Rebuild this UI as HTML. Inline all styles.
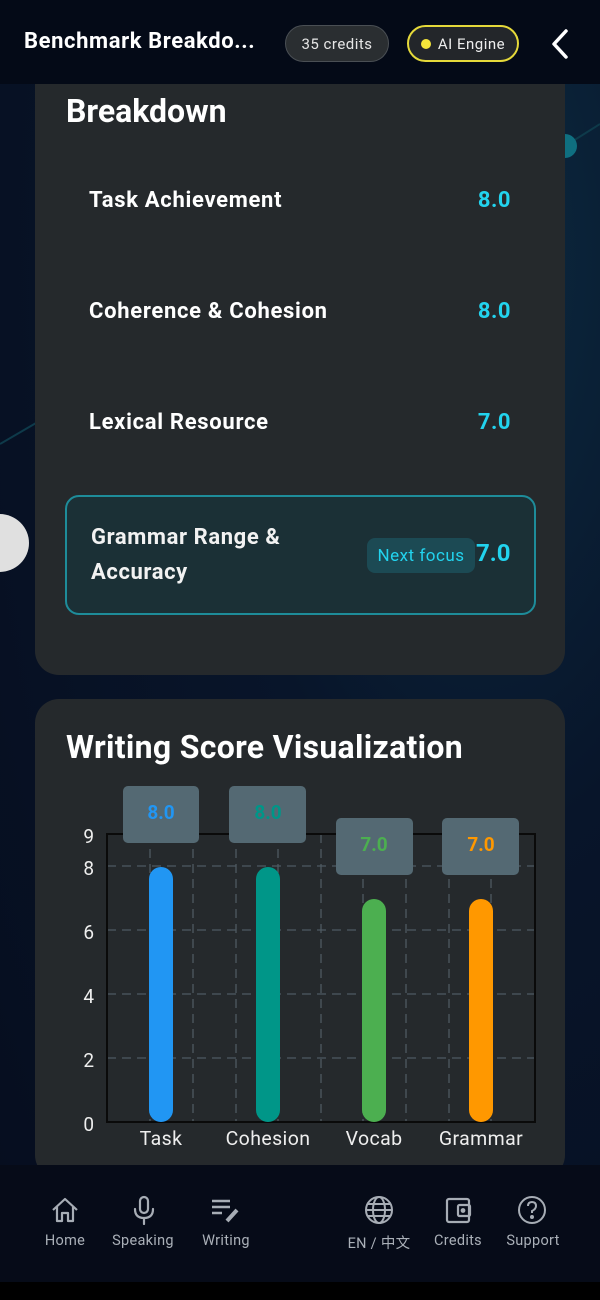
<!DOCTYPE html>
<html><head><meta charset="utf-8"><style>
*{margin:0;padding:0;box-sizing:border-box}
body{width:600px;height:1300px;overflow:hidden;background:#071226;font-family:"Roboto","Liberation Sans","Noto Sans CJK SC",sans-serif;color:#fff;position:relative}
.bg{position:absolute;inset:0;background:radial-gradient(ellipse at 80% 20%,#0c2a40 0%,#08152a 40%,#060d1e 100%)}
.hdr{position:absolute;left:0;top:0;width:600px;height:84px;background:#040a17}
.title{position:absolute;left:24px;top:29px;font-size:22px;font-weight:bold;letter-spacing:.6px}
.pill{position:absolute;top:25px;height:37px;border-radius:19px;font-size:15px;display:flex;align-items:center;justify-content:center;letter-spacing:.5px}
.row{position:absolute;left:89px;font-size:22px;font-weight:bold;letter-spacing:.7px}
.val{position:absolute;right:89px;font-size:22px;font-weight:bold;color:#22d3ee;letter-spacing:.5px}
.nav{position:absolute;left:0;top:1165px;width:600px;height:117px;background:#060b18}
.ni{position:absolute;top:1232px;font-size:14.5px;color:#aab0b8;text-align:center;width:90px;letter-spacing:.3px}
.ic{position:absolute;top:1195px}
</style></head><body>
<div class="bg"></div>
<svg style="position:absolute;left:0;top:84px" width="600" height="600">
<polyline points="0,360 60,325 305,123 435,152 565,62 600,40" fill="none" stroke="#0e3a4a" stroke-width="2"/>
<circle cx="565" cy="62" r="12" fill="#0f6f80"/>
</svg>
<div class="hdr"></div>
<div class="title">Benchmark Breakdo...</div>
<div class="pill" style="left:285px;width:104px;background:#2a2e31;border:1px solid #4a4f54;color:#e6e6e6">35 credits</div>
<div class="pill" style="left:407px;width:112px;background:#23262a;border:2px solid #e5d93a;color:#eee"><span style="width:10px;height:10px;border-radius:50%;background:#f5e63a;margin-right:7px"></span>AI Engine</div>
<svg style="position:absolute;left:548px;top:28px" width="24" height="32"><polyline points="18,3 6,16 18,29" fill="none" stroke="#fff" stroke-width="3.5" stroke-linecap="round" stroke-linejoin="round"/></svg>

<div style="position:absolute;left:0;top:84px;width:600px;height:600px;overflow:hidden">
<div style="position:absolute;left:35px;top:-30px;width:530px;height:621px;background:#25292c;border-radius:24px"></div>
<div style="position:absolute;left:66px;top:8px;font-size:32px;font-weight:bold">Breakdown</div>
</div>
<div class="row" style="top:188px">Task Achievement</div><div class="val" style="top:188px">8.0</div>
<div class="row" style="top:299px">Coherence &amp; Cohesion</div><div class="val" style="top:299px">8.0</div>
<div class="row" style="top:410px">Lexical Resource</div><div class="val" style="top:410px">7.0</div>
<div style="position:absolute;left:65px;top:495px;width:471px;height:120px;border:2px solid #1e8c9a;border-radius:14px;background:#1b3036"></div>
<div style="position:absolute;left:91px;top:520px;font-size:22px;font-weight:bold;line-height:35px;color:#f2f2f2;letter-spacing:.6px">Grammar Range &amp;<br>Accuracy</div>
<div style="position:absolute;left:367px;top:538px;width:108px;height:35px;background:#1c4a54;border-radius:8px;color:#22d3ee;font-size:17px;display:flex;align-items:center;justify-content:center;letter-spacing:.5px">Next focus</div>
<div style="position:absolute;left:476px;top:539px;font-size:24px;font-weight:bold;color:#22d3ee">7.0</div>
<div style="position:absolute;left:-30px;top:514px;width:59px;height:58px;border-radius:50%;background:#e0e0e0"></div>

<div style="position:absolute;left:35px;top:699px;width:530px;height:480px;background:#25292c;border-radius:24px"></div>
<div style="position:absolute;left:66px;top:728px;font-size:32px;font-weight:bold;letter-spacing:.3px">Writing Score Visualization</div>
<svg style="position:absolute;left:0;top:0" width="600" height="1165" font-family="Roboto,Liberation Sans,sans-serif">
<g stroke="#4e5a62" stroke-width="1.3" stroke-dasharray="9,6">
<line x1="107" y1="866" x2="535" y2="866"/><line x1="107" y1="930" x2="535" y2="930"/><line x1="107" y1="994" x2="535" y2="994"/><line x1="107" y1="1058" x2="535" y2="1058"/>
<line x1="150" y1="834" x2="150" y2="1122"/><line x1="193" y1="834" x2="193" y2="1122"/><line x1="236" y1="834" x2="236" y2="1122"/><line x1="278" y1="834" x2="278" y2="1122"/><line x1="321" y1="834" x2="321" y2="1122"/><line x1="363" y1="834" x2="363" y2="1122"/><line x1="406" y1="834" x2="406" y2="1122"/><line x1="449" y1="834" x2="449" y2="1122"/><line x1="491" y1="834" x2="491" y2="1122"/>
</g>
<rect x="107" y="834" width="428" height="288" fill="none" stroke="#0a0a0a" stroke-width="2"/>
<g font-size="19" fill="#eee" text-anchor="end"><text x="94" y="843">9</text><text x="94" y="875">8</text><text x="94" y="939">6</text><text x="94" y="1003">4</text><text x="94" y="1067">2</text><text x="94" y="1131">0</text></g>
<rect x="149" y="867" width="24" height="255" rx="12" fill="#2196f3"/>
<rect x="256" y="867" width="24" height="255" rx="12" fill="#009688"/>
<rect x="362" y="899" width="24" height="223" rx="12" fill="#4caf50"/>
<rect x="469" y="899" width="24" height="223" rx="12" fill="#ff9800"/>
<g fill="#546973"><rect x="123" y="786" width="76" height="57" rx="5"/><rect x="229" y="786" width="77" height="57" rx="5"/><rect x="336" y="818" width="77" height="57" rx="5"/><rect x="442" y="818" width="77" height="57" rx="5"/></g>
<g font-size="19" font-weight="bold" text-anchor="middle"><text x="161" y="819" fill="#2196f3">8.0</text><text x="268" y="819" fill="#009688">8.0</text><text x="374" y="851" fill="#4caf50">7.0</text><text x="481" y="851" fill="#ff9800">7.0</text></g>
<g font-size="19.5" fill="#eee" text-anchor="middle" letter-spacing=".4"><text x="161" y="1145">Task</text><text x="268" y="1145">Cohesion</text><text x="374" y="1145">Vocab</text><text x="481" y="1145">Grammar</text></g>
</svg>

<div class="nav"></div>
<div style="position:absolute;left:0;top:1282px;width:600px;height:18px;background:#000"></div>
<svg class="ic" style="left:50px" width="30" height="30" fill="none" stroke="#a7adb5" stroke-width="2.2" stroke-linejoin="round"><path d="M3 15 L15 4 L27 15 M7 12 V26 H12 V18 H18 V26 H23 V12"/></svg>
<svg class="ic" style="left:129px" width="30" height="30" fill="none" stroke="#a7adb5" stroke-width="2.2" stroke-linecap="round"><rect x="11" y="2" width="8" height="16" rx="4"/><path d="M6 14 Q6 23 15 23 Q24 23 24 14 M15 23 V29"/></svg>
<svg class="ic" style="left:210px" width="32" height="30" fill="none" stroke="#a7adb5" stroke-width="2.4"><path d="M2 6 H20 M2 12 H20 M2 18 H12"/><path d="M17 26 L27 15" stroke-width="4"/></svg>
<svg class="ic" style="left:364px" width="30" height="30" fill="none" stroke="#a7adb5" stroke-width="2"><circle cx="15" cy="15" r="13"/><ellipse cx="15" cy="15" rx="6" ry="13"/><path d="M2 15 H28 M4 9 H26 M4 21 H26"/></svg>
<svg class="ic" style="left:444px" width="30" height="30" fill="none" stroke="#a7adb5" stroke-width="2.2"><rect x="3" y="4" width="22" height="23" rx="2"/><rect x="14" y="10" width="12" height="11" rx="1.5"/><circle cx="19" cy="15.5" r="1.3" fill="#a7adb5"/></svg>
<svg class="ic" style="left:517px" width="30" height="30" fill="none" stroke="#a7adb5" stroke-width="2"><circle cx="15" cy="15" r="13"/><path d="M11 11 Q11 7 15 7 Q19 7 19 11 Q19 14 15 16 V18"/><circle cx="15" cy="22" r="1" fill="#a7adb5"/></svg>
<div class="ni" style="left:20px">Home</div>
<div class="ni" style="left:98px">Speaking</div>
<div class="ni" style="left:181px">Writing</div>
<div class="ni" style="left:334px">EN / 中文</div>
<div class="ni" style="left:413px">Credits</div>
<div class="ni" style="left:488px">Support</div>
</body></html>
